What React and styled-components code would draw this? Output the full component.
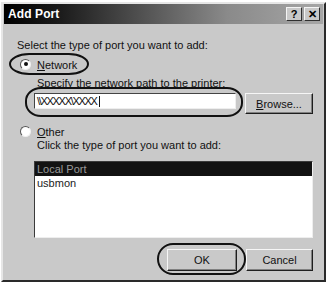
import React from 'react'
import styled, { createGlobalStyle } from 'styled-components'

const Global = createGlobalStyle`
  html, body { margin: 0; padding: 0; background: #fff; }
  body { font-family: 'Liberation Sans', Arial, sans-serif; font-size: 11px; color: #111; }
`

// dialog frame
const Window = styled.div`
  box-sizing: border-box;
  width: 325px;
  height: 280px;
  margin: 2px 0 0 1px;
  background: #c9c9c9;
  border: 2px solid;
  border-color: #e6e6e6 #2a2a2a #2a2a2a #e6e6e6;
  display: flex;
  flex-direction: column;
`

const TitleBar = styled.div`
  height: 20px;
  margin: 0 1px;
  background: linear-gradient(90deg, #000 0%, #1c1c1c 18%, #8a8a8a 70%, #a6a6a6 100%);
  display: flex;
  align-items: center;
  padding: 0 3px 0 4px;
  color: #fff;
  font-weight: bold;
  font-size: 12px;
`

const Title = styled.span`
  flex: 1;
  letter-spacing: 0.1px;
`

const CapButton = styled.div`
  box-sizing: border-box;
  width: 16px;
  height: 14px;
  margin-left: ${p => p.gap || 0}px;
  background: #c9c9c9;
  border: 1px solid;
  border-color: #f4f4f4 #303030 #303030 #f4f4f4;
  color: #000;
  font-size: 11px;
  font-weight: bold;
  display: flex;
  align-items: center;
  justify-content: center;
  line-height: 1;
`

const Content = styled.div`
  padding: 0 11px 0 14px;
  display: flex;
  flex-direction: column;
`

const Label = styled.div`
  line-height: 13px;
  height: 13px;
  margin-top: ${p => p.top || 0}px;
  margin-left: ${p => p.indent || 0}px;
  white-space: nowrap;
`

// hand-drawn style ring that sits over a control
const Ringed = styled.div`
  position: relative;
  display: inline-flex;
  &::after {
    content: '';
    position: absolute;
    top: -${p => p.t}px;
    bottom: -${p => p.b}px;
    left: -${p => p.l}px;
    right: -${p => p.r}px;
    border: 2.5px solid #111;
    border-radius: ${p => p.rx}px / ${p => p.ry}px;
    pointer-events: none;
  }
`

const RadioRow = styled.div`
  display: flex;
  align-items: center;
  height: 13px;
  margin-top: ${p => p.top || 0}px;
  margin-left: 3px;
`

const Radio = styled.span`
  box-sizing: border-box;
  width: 11px;
  height: 11px;
  border-radius: 50%;
  background: #fff;
  border: 1.5px solid;
  border-color: #555 #f0f0f0 #f0f0f0 #555;
  display: inline-flex;
  align-items: center;
  justify-content: center;
  margin-right: 6px;
  &::after {
    content: '';
    width: 4px;
    height: 4px;
    border-radius: 50%;
    background: ${p => p.checked ? '#111' : 'transparent'};
  }
`

const U = styled.span`
  text-decoration: underline;
`

const PathRow = styled.div`
  display: flex;
  align-items: flex-start;
  margin-top: 3px;
  margin-left: 17px;
`

const TextBox = styled.div`
  box-sizing: border-box;
  width: 202px;
  height: 16px;
  background: #fff;
  border: 1px solid;
  border-color: #444 #eee #eee #444;
  padding: 0 2px;
  display: flex;
  align-items: center;
  font-size: 11px;
  letter-spacing: -1.3px;
  color: #111;
`

const Caret = styled.span`
  width: 1px;
  height: 11px;
  background: #111;
  margin-left: 2px;
`

const Button = styled.div`
  box-sizing: border-box;
  width: ${p => p.w}px;
  height: ${p => p.h}px;
  margin-left: ${p => p.gap || 0}px;
  background: #c9c9c9;
  border: 1px solid;
  border-color: #f6f6f6 #1e1e1e #1e1e1e #f6f6f6;
  box-shadow: inset -1px -1px 0 #808080;
  display: flex;
  align-items: center;
  justify-content: center;
`

const List = styled.div`
  box-sizing: border-box;
  height: 77px;
  margin: 9px 0 0 17px;
  background: #fff;
  border: 1px solid;
  border-color: #3a3a3a #eee #eee #3a3a3a;
  display: flex;
  flex-direction: column;
`

const ListItem = styled.div`
  height: 14px;
  line-height: 14px;
  padding-left: 2px;
  background: ${p => p.selected ? '#121212' : 'transparent'};
  color: ${p => p.selected ? '#9a9a9a' : '#222'};
`

const Footer = styled.div`
  display: flex;
  justify-content: flex-end;
  margin-top: 11px;
`

export default function App() {
  return (
    <>
      <Global />
      <Window>
        <TitleBar>
          <Title>Add Port</Title>
          <CapButton>?</CapButton>
          <CapButton gap={2}>✕</CapButton>
        </TitleBar>
        <Content>
          <Label top={15}>Select the type of port you want to add:</Label>
          <RadioRow top={6}>
            <Ringed t={6} b={4} l={11} r={12} rx={22} ry={12}>
              <Radio checked />
              <span><U>N</U>etwork</span>
            </Ringed>
          </RadioRow>
          <Label top={6} indent={20}>Specify the network path to the printer:</Label>
          <PathRow>
            <Ringed t={6} b={8} l={9} r={7} rx={16} ry={14}>
              <TextBox>\\XXXXX\XXXX<Caret /></TextBox>
            </Ringed>
            <Button w={68} h={21} gap={9}><span><U>B</U>rowse...</span></Button>
          </PathRow>
          <RadioRow top={11}>
            <Radio />
            <span><U>O</U>ther</span>
          </RadioRow>
          <Label top={1} indent={20}>Click the type of port you want to add:</Label>
          <List>
            <ListItem selected>Local Port</ListItem>
            <ListItem>usbmon</ListItem>
          </List>
          <Footer>
            <Ringed t={6} b={4} l={10} r={9} rx={16} ry={16}>
              <Button w={70} h={22}>OK</Button>
            </Ringed>
            <Button w={67} h={22} gap={9}>Cancel</Button>
          </Footer>
        </Content>
      </Window>
    </>
  )
}
